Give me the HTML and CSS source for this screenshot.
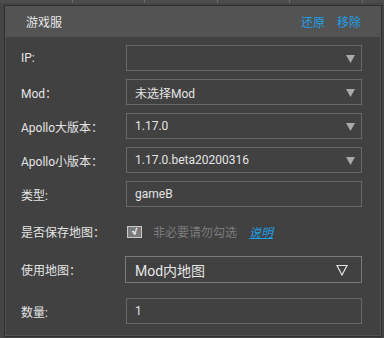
FILE: index.html
```html
<!DOCTYPE html>
<html lang="zh">
<head>
<meta charset="utf-8">
<link rel="stylesheet" href="styles.css">
</head>
<body>
<div class="strip"><span></span><span></span><span></span><span></span><span></span></div>
<div class="panel">
  <div class="head">
    <span class="title">游戏服</span>
    <span class="links"><a>还原</a><a>移除</a></span>
  </div>
  <div class="body">
    <div class="row">
      <span class="label">IP:</span>
      <div class="box select"><span class="val"></span><svg class="arrow" width="9" height="8" viewBox="0 0 9 8"><path d="M0 0H9L4.5 8Z" fill="#a9a9a9"/></svg></div>
    </div>
    <div class="row">
      <span class="label">Mod：</span>
      <div class="box select"><span class="val">未选择Mod</span><svg class="arrow" width="9" height="8" viewBox="0 0 9 8"><path d="M0 0H9L4.5 8Z" fill="#a9a9a9"/></svg></div>
    </div>
    <div class="row">
      <span class="label">Apollo大版本：</span>
      <div class="box select"><span class="val">1.17.0</span><svg class="arrow" width="9" height="8" viewBox="0 0 9 8"><path d="M0 0H9L4.5 8Z" fill="#a9a9a9"/></svg></div>
    </div>
    <div class="row">
      <span class="label">Apollo小版本：</span>
      <div class="box select"><span class="val">1.17.0.beta20200316</span><svg class="arrow" width="9" height="8" viewBox="0 0 9 8"><path d="M0 0H9L4.5 8Z" fill="#a9a9a9"/></svg></div>
    </div>
    <div class="row">
      <span class="label">类型:</span>
      <div class="box"><span class="val">gameB</span></div>
    </div>
    <div class="row check-row">
      <span class="label">是否保存地图：</span>
      <span class="check">√</span>
      <span class="hint">非必要请勿勾选</span>
      <a class="help">说明</a>
    </div>
    <div class="row">
      <span class="label">使用地图：</span>
      <div class="box big"><span class="val">Mod内地图</span><svg class="tri" width="12" height="12" viewBox="0 0 12 12"><path d="M1 1.5H11L6 11Z" fill="none" stroke="#e0e0e0" stroke-width="1.2"/></svg></div>
    </div>
    <div class="row last">
      <span class="label">数量:</span>
      <div class="box"><span class="val">1</span></div>
    </div>
  </div>
</div>
</body>
</html>
```
FILE: styles.css
```css
* { box-sizing: border-box; }
html, body { margin: 0; padding: 0; }
body {
  width: 384px;
  height: 338px;
  overflow: hidden;
  background: #454545;
  font-family: Roboto, "Noto Sans CJK SC", sans-serif;
  font-size: 12px;
  color: #e4e4e4;
}
.strip {
  height: 3px;
  display: flex;
  background: #4c4c4c;
}
.strip span {
  width: 72.5px;
  border-right: 1px solid #6a6a6a;
}
.panel {
  margin: 2px 0 0 4px;
  width: 378px;
  height: 332px;
  border: 1px solid #2f2f2f;
  background: #535353;
  display: flex;
  flex-direction: column;
}
.head {
  height: 31px;
  flex: none;
  display: flex;
  align-items: center;
  justify-content: space-between;
  padding: 0 20px 0 21px;
  color: #e6e6e6;
}
.links { display: flex; gap: 12px; }
.links a { color: #1e9fe6; }
.body {
  flex: 1;
  margin: 0 1px 1px 1px;
  background: #414141;
  padding: 8px 17px 0 15px;
  display: flex;
  flex-direction: column;
  gap: 8px;
}
.row {
  display: flex;
  align-items: center;
  height: 26px;
}
.label {
  width: 105px;
  flex: none;
  white-space: nowrap;
}
.box {
  width: 236px;
  height: 26px;
  border: 1px solid #686868;
  display: flex;
  align-items: center;
  justify-content: space-between;
  padding: 0 6px 0 8px;
}
.arrow { flex: none; margin-top: 1px; }
.check-row { height: 33px; }
.check {
  width: 15px;
  height: 12px;
  border: 1px solid #c8c8c8;
  background: #7a7a7a;
  color: #f4f4f4;
  font-size: 10px;
  line-height: 10px;
  text-align: center;
  font-weight: bold;
  margin-left: 1px;
}
.hint { color: #7b7b7b; margin-left: 11px; }
.help {
  color: #1e9fe6;
  font-style: italic;
  text-decoration: underline;
  margin-left: 12px;
}
.row .big {
  width: 237px;
  height: 27px;
  margin-left: -1px;
  border-color: #7a7a7a;
  font-size: 14px;
  padding: 0 13px 0 9px;
}
.row:has(.big) { height: 27px; }
.tri { flex: none; }
.last { margin-top: 7px; }
```
